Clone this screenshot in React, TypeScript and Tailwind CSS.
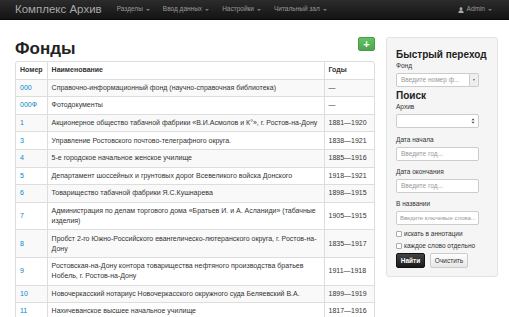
import React from "react";

const rows: { n: string; name: React.ReactNode; years: string; two?: boolean }[] = [
  { n: "000", name: "Справочно-информационный фонд (научно-справочная библиотека)", years: "—" },
  { n: "000Ф", name: "Фотодокументы", years: "—" },
  { n: "1", name: "Акционерное общество табачной фабрики «В.И.Асмолов и К°», г. Ростов-на-Дону", years: "1881—1920" },
  { n: "3", name: "Управление Ростовского почтово-телеграфного округа.", years: "1838—1921" },
  { n: "4", name: "5-е городское начальное женское училище", years: "1885—1916" },
  { n: "5", name: "Департамент шоссейных и грунтовых дорог Всевеликого войска Донского", years: "1918—1921" },
  { n: "6", name: "Товарищество табачной фабрики Я.С.Кушнарева", years: "1898—1915" },
  { n: "7", name: <>Администрация по делам торгового дома «Братьев И. и А. Асланиди» (табачные<br />изделия)</>, years: "1905—1915", two: true },
  { n: "8", name: <>Пробст 2-го Южно-Российского евангелическо-лютеранского округа, г. Ростов-на-<br />Дону</>, years: "1835—1917", two: true },
  { n: "9", name: <>Ростовская-на-Дону контора товарищества нефтяного производства братьев<br />Нобель, г. Ростов-на-Дону</>, years: "1911—1918", two: true },
  { n: "10", name: "Новочеркасский нотариус Новочеркасского окружного суда Беляевский В.А.", years: "1899—1919" },
  { n: "11", name: "Нахичеванское высшее начальное училище", years: "1817—1916" },
];

function Caret() {
  return <span className="inline-block ml-[3px] align-middle w-0 h-0 border-l-[2px] border-r-[2px] border-t-[2px] border-l-transparent border-r-transparent border-t-[#777]" />;
}

export default function App() {
  return (
    <div className="w-[509px] h-[317px] overflow-hidden bg-white text-[#333]" style={{ fontFamily: '"Liberation Sans", Arial, sans-serif' }}>
      {/* navbar */}
      <div className="h-[20px] bg-gradient-to-b from-[#2c2c2c] to-[#141414] border-b border-[#0a0a0a] flex items-center px-[15px]">
        <span className="text-[11.5px] text-[#a8a8a8] mr-[15px] leading-none">Комплекс Архив</span>
        <div className="flex items-center gap-[13px] text-[6.5px] text-[#9a9a9a] leading-none">
          <span>Разделы<Caret /></span>
          <span>Ввод данных<Caret /></span>
          <span>Настройки<Caret /></span>
          <span>Читальный зал<Caret /></span>
        </div>
        <div className="ml-auto mr-[2px] flex items-center text-[6.5px] text-[#9a9a9a] leading-none">
          <svg width="6" height="6" viewBox="0 0 10 10" className="mr-[3px]"><circle cx="5" cy="3" r="2.4" fill="#aaa" /><path d="M0.5 10 C1 6.2 3 5.6 5 5.6 C7 5.6 9 6.2 9.5 10 Z" fill="#aaa" /></svg>
          <span>Admin<Caret /></span>
        </div>
      </div>

      <div className="flex px-[15px] pt-[17px] gap-[11px]">
        {/* main */}
        <div className="w-[360px] shrink-0">
          <div className="flex items-start justify-between h-[24px]">
            <h1 className="text-[17px] font-bold leading-none text-[#222] mt-[3px]">Фонды</h1>
            <div className="w-[17px] h-[14px] rounded-[2px] bg-gradient-to-b from-[#62c462] to-[#51a351] border border-[#4a9a4a] flex items-center justify-center text-white font-bold text-[11px] leading-none">+</div>
          </div>
          <div className="border border-[#ddd] rounded-[3px] overflow-hidden text-[7px] leading-[10px]">
            <table className="w-full border-collapse">
              <thead>
                <tr>
                  <th className="w-[30px] text-left font-bold px-[4px] py-[3.3px] border-r border-[#ddd]">Номер</th>
                  <th className="text-left font-bold px-[4px] py-[3.3px] border-r border-[#ddd]">Наименование</th>
                  <th className="w-[50px] text-left font-bold px-[4px] py-[3.3px]">Годы</th>
                </tr>
              </thead>
              <tbody>
                {rows.map((r, i) => (
                  <tr key={i} className={i % 2 === 0 ? "bg-[#f9f9f9]" : "bg-white"}>
                    <td className="border-t border-r border-[#ddd] px-[4px] py-[3.3px] text-[#0088cc] align-middle">{r.n}</td>
                    <td className="border-t border-r border-[#ddd] px-[4px] py-[3.3px] whitespace-nowrap">{r.name}</td>
                    <td className="border-t border-[#ddd] px-[4px] py-[3.3px] align-middle whitespace-nowrap">{r.years}</td>
                  </tr>
                ))}
              </tbody>
            </table>
          </div>
        </div>

        {/* sidebar */}
        <div className="w-[112px] h-[240px] shrink-0 bg-[#f5f5f5] border border-[#e3e3e3] rounded-[3px] px-[9px] pt-[11px] text-[6.5px] leading-[8px]">
          <div className="text-[10px] font-bold text-[#222] leading-[12px]">Быстрый переход</div>
          <div className="mt-[1px] text-[#333]">Фонд</div>
          <div className="mt-[3px] flex w-[83px] h-[14px]">
            <div className="flex-1 bg-white border border-[#ccc] rounded-l-[2px] flex items-center px-[4px] text-[#999] whitespace-nowrap overflow-hidden">Введите номер ф...</div>
            <div className="w-[9px] border border-l-0 border-[#ccc] rounded-r-[2px] bg-[#eee] flex items-center justify-center">
              <span className="w-0 h-0 border-l-[1.5px] border-r-[1.5px] border-t-[2px] border-l-transparent border-r-transparent border-t-[#666]" />
            </div>
          </div>
          <div className="mt-[3px] text-[10px] font-bold text-[#222] leading-[12px]">Поиск</div>
          <div className="mt-[1px]">Архив</div>
          <div className="mt-[3px] w-[83px] h-[14px] bg-white border border-[#ccc] rounded-[2px] flex items-center justify-end pr-[3px]">
            <svg width="4" height="6" viewBox="0 0 4 6"><path d="M0.5 2.3 L2 0.5 L3.5 2.3 Z M0.5 3.7 L2 5.5 L3.5 3.7 Z" fill="#444" /></svg>
          </div>
          <div className="mt-[8px]">Дата начала</div>
          <div className="mt-[3px] w-[83px] h-[14px] bg-white border border-[#ccc] rounded-[2px] flex items-center px-[4px] text-[#999]">Введите год...</div>
          <div className="mt-[7px]">Дата окончания</div>
          <div className="mt-[3px] w-[83px] h-[14px] bg-white border border-[#ccc] rounded-[2px] flex items-center px-[4px] text-[#999]">Введите год...</div>
          <div className="mt-[7px]">В названии</div>
          <div className="mt-[3px] w-[83px] h-[14px] bg-white border border-[#ccc] rounded-[2px] flex items-center px-[3px] text-[6px] text-[#999] whitespace-nowrap overflow-hidden">Введите ключевые слова...</div>
          <div className="mt-[5px] flex items-center gap-[2px]">
            <span className="w-[6px] h-[6px] bg-white border border-[#aaa] rounded-[1px]" />
            <span>искать в аннотации</span>
          </div>
          <div className="mt-[4px] flex items-center gap-[2px]">
            <span className="w-[6px] h-[6px] bg-white border border-[#aaa] rounded-[1px]" />
            <span>каждое слово отдельно</span>
          </div>
          <div className="mt-[3px] flex gap-[5px]">
            <div className="w-[29px] h-[15px] rounded-[2px] bg-gradient-to-b from-[#444] to-[#1a1a1a] border border-[#111] text-white font-bold flex items-center justify-center">Найти</div>
            <div className="w-[38px] h-[15px] rounded-[2px] bg-gradient-to-b from-white to-[#e6e6e6] border border-[#ccc] text-[#333] flex items-center justify-center">Очистить</div>
          </div>
        </div>
      </div>
    </div>
  );
}
